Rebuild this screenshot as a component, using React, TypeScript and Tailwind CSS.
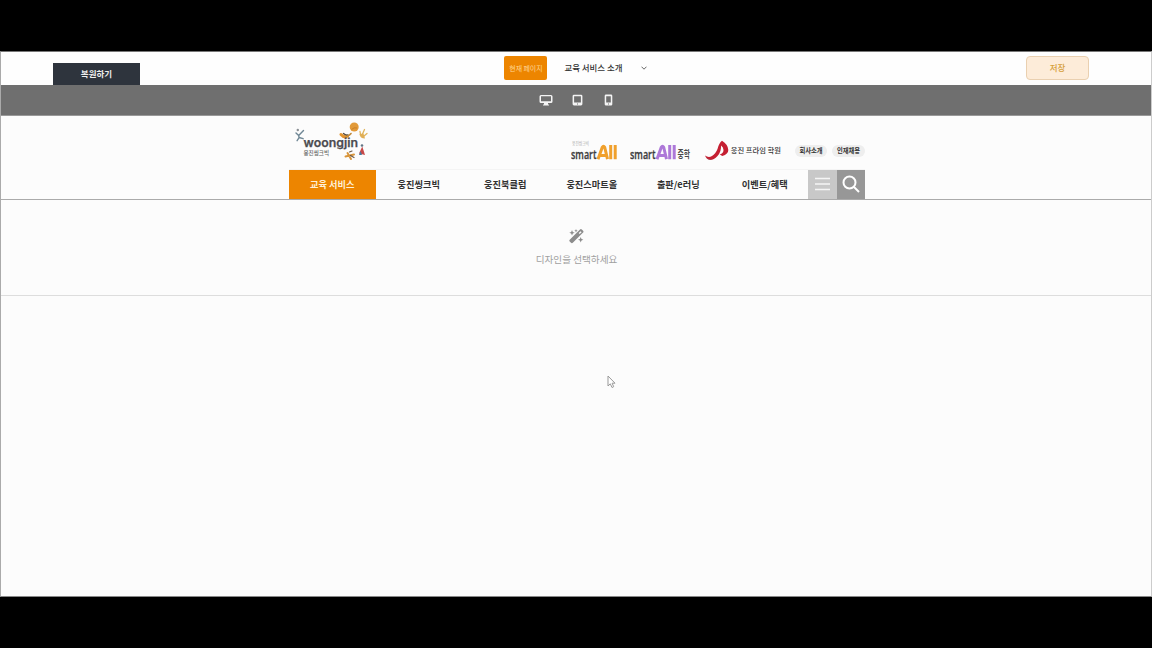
import React from "react";

const menu = ["교육 서비스", "웅진씽크빅", "웅진북클럽", "웅진스마트올", "출판/e러닝", "이벤트/혜택"];

function WoongjinLogo() {
  return (
    <svg width="76" height="42" viewBox="294 120 76 42" className="block" aria-label="woongjin">
      <g fill="none" strokeLinecap="round">
        <path d="M296 133l2.700 2.500 4.800-5M298.700 135.500l.4 2.200-2 3M299.100 137.500l4 1.200" stroke="#6f8795" strokeWidth="1.400" />
        <path d="M341 134.500q3 3.500 6.500 1.700" stroke="#e2942f" strokeWidth="3" />
        <path d="M343.500 133.500q2 2 4.500 1.500" stroke="#544a42" strokeWidth="1.300" />
        <path d="M347.500 136q2-.5 3.500-2.500" stroke="#c28a3a" strokeWidth="1.600" />
        <path d="M360.500 134.500l-.5-3M362.500 134l2-4.500M364 136l3-2.500" stroke="#e0b45a" strokeWidth="1.300" />
        <path d="M345.500 156.500l8.500-2M347.500 153l3.500 6" stroke="#d8953b" strokeWidth="2" />
        <path d="M350.500 155.500l3.500 2M349.500 152l2.500-1" stroke="#6c5a49" strokeWidth="1.200" />
      </g>
      <circle cx="297.800" cy="130" r="1.200" fill="#8a8f94" />
      <circle cx="354.200" cy="127" r="4.500" fill="#e29a39" />
      <path d="M351.500 129.500q2.500-2.500 5.500-1.500" fill="none" stroke="#c77b22" strokeWidth=".9" />
      <path d="M359.500 134q.5 4.500 5.500 4.500l-1.500-5z" fill="#e0ae55" />
      <path d="M362.300 146.500l2.700 8.500-6-1.500z" fill="#c74848" />
      <path d="M360.500 151l-1.500 4h3z" fill="#477ba0" />
      <circle cx="362" cy="145.500" r="1.300" fill="#627585" />
      <text x="303.500" y="147" textLength="54.500" lengthAdjust="spacingAndGlyphs" className="fill-[#4c4c50] stroke-[#4c4c50] font-['Inter'] text-[11.700px] font-semibold [stroke-width:0.250px]">woongjin</text>
      <text x="303.500" y="155.200" textLength="25.500" lengthAdjust="spacingAndGlyphs" className="fill-[#666] text-[6px] font-medium">웅진씽크빅</text>
    </svg>
  );
}

function SmartAll({ middle = false }: { middle?: boolean }) {
  return (
    <svg width={middle ? 61 : 47} height="25" viewBox={middle ? "0 0 61 25" : "0 0 47 25"} className="block">
      {!middle && <text x="1" y="5" textLength="17" lengthAdjust="spacingAndGlyphs" className="fill-[#aaa] text-[5px]">웅진씽크빅</text>}
      <text x="0" y="19" textLength="25.500" lengthAdjust="spacingAndGlyphs" className="fill-[#3e3e40] stroke-[#3e3e40] font-['Open_Sans'] text-[13px] font-semibold [stroke-width:0.300px]">smart</text>
      <g fill="none" stroke={middle ? "#ad78d8" : "#f0a02c"} strokeWidth="3">
        <path d="M27 19.200l4.300-12q1.200-2 2.400 0l2.800 12M29.500 15.500h6" strokeWidth="3" />
        <path d="M39.700 5v14.200M44.200 5v14.200" />
      </g>
      {middle && <text x="47.500" y="18.300" textLength="12.500" lengthAdjust="spacingAndGlyphs" className="fill-[#4a4a4a] text-[10px] font-bold">중학</text>}
    </svg>
  );
}

function PrimeMark() {
  return (
    <svg width="24" height="22" viewBox="704 140 24 22" className="block">
      <path d="M704 155.500q3.500 2.500 7 .5 3.500-2 5.500-7 1.500-6 4.500-8.200 6 3.700 6.300 9.200 0 4-6 6l-2.500-1.500q3.800-1.500 3.700-4.500 0-3-2.500-4.500.5 6-3.500 10.500-3.500 4-7.500 4-3.500-.5-5-4.500z" fill="#c51f32" />
      <path d="M704 154.500q1.500 5 7.500 5.500-5.500.5-7.500-5.500z" fill="#777" />
    </svg>
  );
}

export default function App() {
  return (
    <div className="flex h-[648px] w-[1152px] flex-col overflow-hidden bg-black pt-[51px] font-['Noto_Sans_CJK_KR',sans-serif] text-[#333]">
      <div className="flex h-[546px] flex-col border border-t-[#777] border-r-[#ccc] border-b-[#888] border-l-[#aaa] bg-[#fcfcfc]">
        <header className="grid h-[33px] shrink-0 grid-cols-3 bg-[#fefefe]">
          <div className="flex items-end pl-[52px]">
            <button className="flex h-[22px] w-[87px] items-center justify-center bg-[#2e343d] pb-[2px] text-[8.500px] leading-none font-bold text-[#eee]">복원하기</button>
          </div>
          <div className="flex items-center justify-center gap-[17px] pr-px pb-[1px]">
            <span className="flex h-6 w-[43px] items-center justify-center rounded-[2px] bg-[#ed8500] text-[6.900px] leading-none whitespace-nowrap text-[#ffd796]">현재 페이지</span>
            <div className="flex items-center gap-[18px]">
              <span className="-mt-px text-[8.450px] leading-none font-medium whitespace-nowrap">교육 서비스 소개</span>
              <svg width="6" height="4" viewBox="0 0 6 4" fill="none" stroke="#666" strokeWidth="1"><path d="M.5.7L3 3.200 5.500.7" /></svg>
            </div>
          </div>
          <div className="flex items-start justify-end pt-[4px] pr-[62px]">
            <button className="flex h-[24px] w-[63px] items-center justify-center rounded-[4px] border border-[#ead0b0] bg-[#fdecd9] pb-px text-[8.500px] leading-none font-medium text-[#d6a03c]">저장</button>
          </div>
        </header>
        <div className="flex h-[31px] shrink-0 items-center justify-center gap-[18px] border-b border-[#999] bg-[#6f6f6f] pl-px">
          <svg width="14" height="12" viewBox="0 0 14 12" className="fill-[#f4f4f4]"><path fillRule="evenodd" d="M2 1h10q1.500 0 1.500 1.500v5Q13.500 9 12 9H9v1l1 1v.5H4V11l1-1V9H2Q.5 9 .5 7.500v-5Q.5 1 2 1zm0 1.300v4.900h10V2.300z" /></svg>
          <svg width="13" height="12" viewBox="0 0 13 12" className="fill-[#f4f4f4]"><path fillRule="evenodd" d="M3 .7h7q1.400 0 1.400 1.400v8q0 1.400-1.400 1.400H3q-1.400 0-1.400-1.400v-8Q1.600.7 3 .7zm.1 1.600v6.200h6.800V2.300zM6 9.500v1h1v-1z" /></svg>
          <svg width="13" height="12" viewBox="0 0 13 12" className="fill-[#f4f4f4]"><path fillRule="evenodd" d="M4 .5h5q1.300 0 1.300 1.300v8.500q0 1.300-1.300 1.300H4q-1.300 0-1.300-1.300V1.800Q2.700.5 4 .5zm.2 1.700v6.300h4.600V2.200zM6 9.600v.9h1v-.9z" /></svg>
        </div>
        <section className="h-[84px] shrink-0 border-b border-[#aaa] pl-[2px]">
          <div className="mx-auto flex h-[54px] w-[576px] items-start justify-between border-b border-[#f4f4f4]">
            <div className="pt-[4px] pl-[5px]"><WoongjinLogo /></div>
            <div className="flex items-start pt-[24px] leading-none">
              <SmartAll />
              <div className="ml-3"><SmartAll middle /></div>
              <div className="ml-[14px]"><PrimeMark /></div>
              <span className="mt-[7px] ml-[2px] text-[7.300px] leading-none font-medium whitespace-nowrap">웅진 프라임 학원</span>
              <span className="mt-[5px] ml-[14px] flex h-[12px] w-[32px] items-center justify-center rounded-full bg-[#eee] text-[6.300px] leading-none font-bold">회사소개</span>
              <span className="mt-[5px] ml-[5px] flex h-[12px] w-[33px] items-center justify-center rounded-full bg-[#eee] text-[6.300px] leading-none font-bold">인재채용</span>
            </div>
          </div>
          <nav className="mx-auto flex h-[29px] w-[576px]">
            {menu.map((item, index) => (
              <a key={item} className={index === 0 ? "flex flex-1 items-center justify-center bg-[#ed8500] text-[9.200px] leading-none font-bold text-[#fff0d8]" : "flex flex-1 items-center justify-center text-[9.200px] leading-none font-bold text-[#303030]"}>{item}</a>
            ))}
            <button className="flex w-[29px] items-center justify-center bg-[#c8c8c8] pb-[2px]">
              <svg width="15" height="14" viewBox="0 0 15 14" stroke="#f5f5f5" strokeWidth="1.600"><path d="M0 1.500h15M0 7h15M0 12.500h15" /></svg>
            </button>
            <button className="flex w-[28px] items-center justify-center bg-[#979797] pb-[2px]">
              <svg width="18" height="18" viewBox="0 0 18 18" fill="none" stroke="#fff" strokeWidth="2"><circle cx="7.500" cy="7.500" r="6" /><path d="M12 12l5 5" /></svg>
            </button>
          </nav>
        </section>
        <section className="flex h-[96px] shrink-0 flex-col items-center border-b border-[#ddd] pt-[29px] pl-px">
          <svg width="15" height="15" viewBox="0 0 15 15" fill="#8c8c8c">
            <path fillRule="evenodd" d="M11 .5q1-.8 1.800 0l1.300 1.300q.8.900 0 1.800L3.800 13.800q-.9.800-1.800 0l-1.300-1.300q-.8-.9 0-1.800zM9.700 4.100l1 1 1.900-1.900-1-1z" />
            <path d="M3 1l.8 1.900 1.900.8-1.900.8L3 6.400l-.8-1.900-1.900-.8 1.900-.8zM7 0l.5 1.200 1.200.5-1.200.5L7 3.400l-.5-1.200-1.200-.5 1.200-.5zM11.700 8l.8 1.900 1.900.8-1.900.8-.8 1.900-.8-1.900-1.900-.8 1.900-.8z" />
          </svg>
          <p className="mt-[11px] text-[9.600px] leading-none text-[#a0a0a0]">디자인을 선택하세요</p>
        </section>
        <div className="relative flex-1">
          <svg width="10" height="14" viewBox="0 0 10 14" className="absolute top-[79px] left-[606px]" fill="#fff" stroke="#999" strokeWidth="1"><path d="M1 1v10l2.300-2.200 1.700 3.700 1.700-.8L5.100 8.200H8z" /></svg>
        </div>
      </div>
    </div>
  );
}
